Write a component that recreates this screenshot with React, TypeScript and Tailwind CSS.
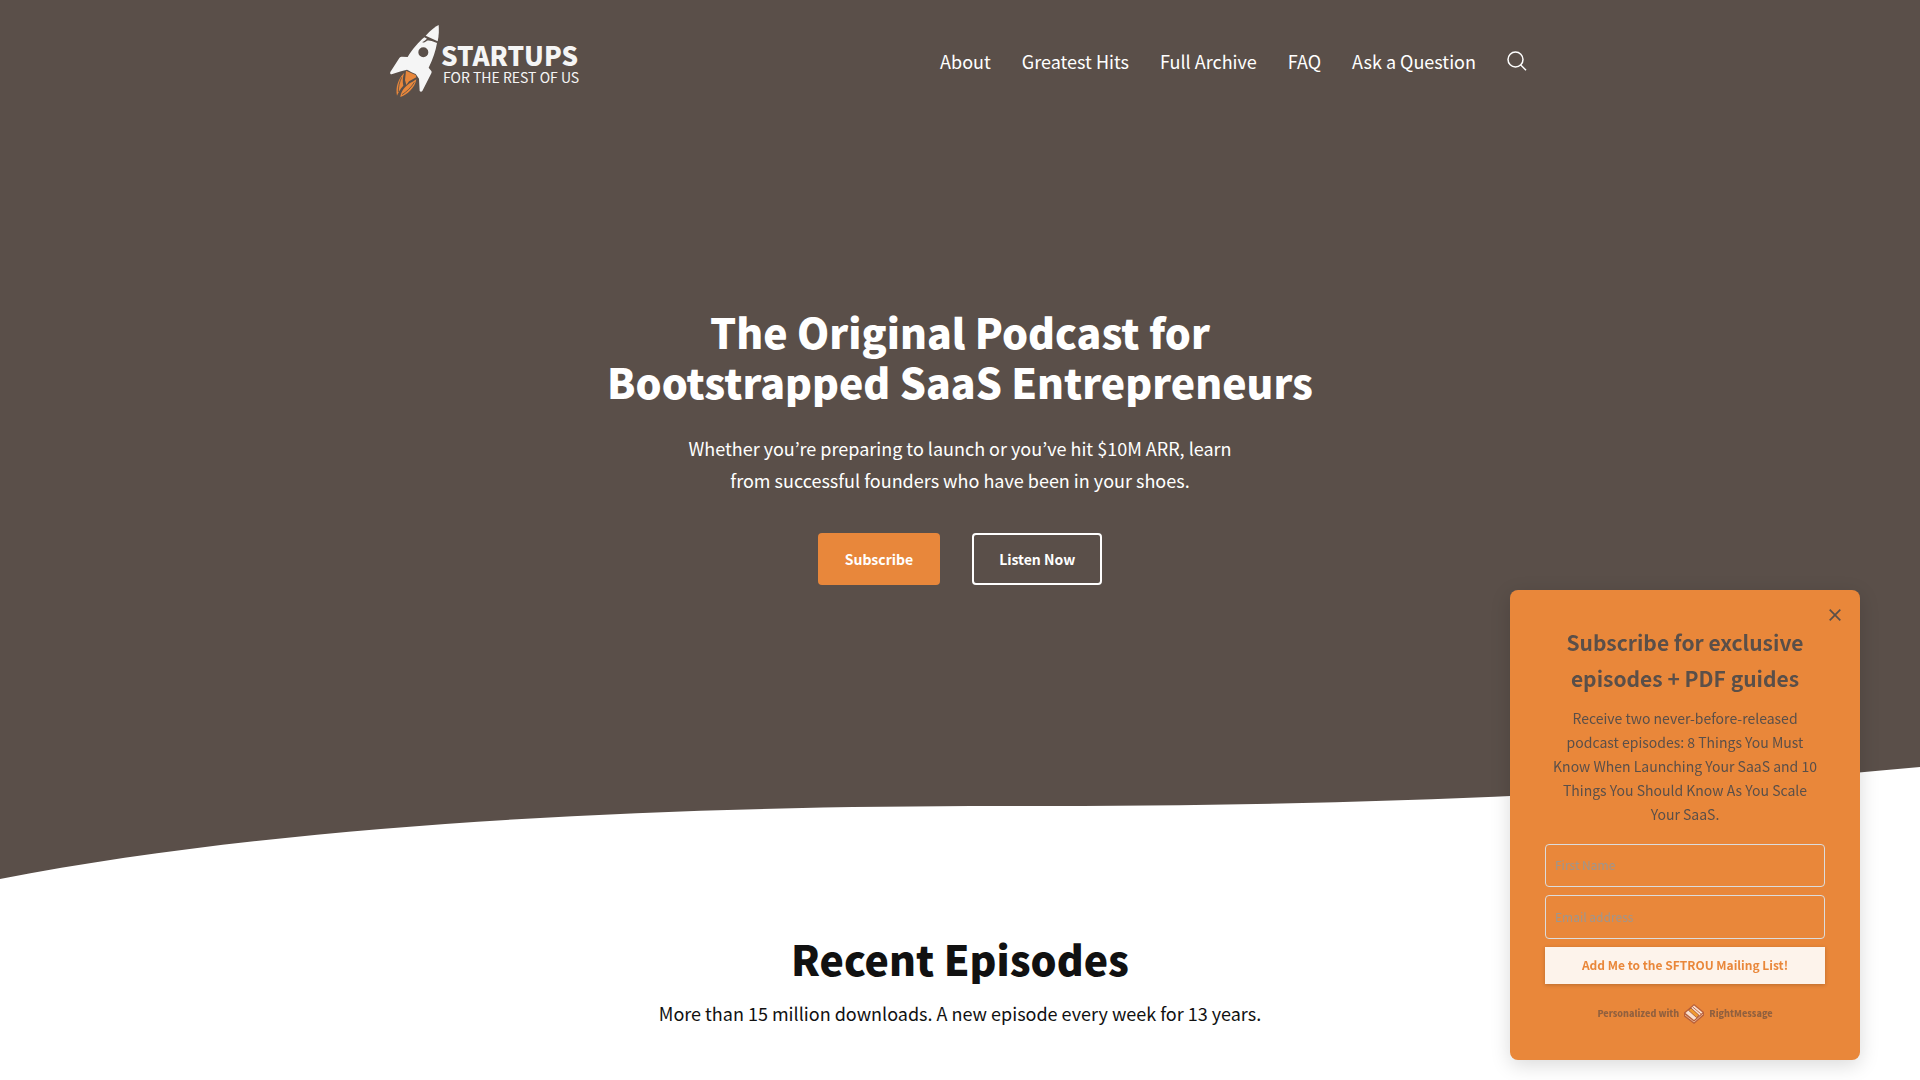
import React from "react";

const navLinks = ["About", "Greatest Hits", "Full Archive", "FAQ", "Ask a Question"];

function Rocket() {
  return (
    <svg viewBox="0 0 180 240" className="h-20 w-15 shrink-0" aria-hidden="true">
      <path
        fill="#f5f5f5"
        d="M161 15 C151 20 136 31 122 47 L158 64 C162 46 162 29 161 15 Z"
      />
      <path
        fill="#f5f5f5"
        fillRule="evenodd"
        d="M118 52 L126 56 C121 60 117 65 112 66 C115 70 120 66 126 62 C131 60 135 62 140 63 L156 69 C152 92 144 118 131 143 L139 153 Q141 156 139 160 L112 213 Q108 218 104 213 L102 176 L92 162 C82 158 74 153 66 149 L48 154 L20 163 Q14 163 16 156 L43 114 Q46 110 50 110 L68 111 C82 88 101 66 118 52 Z M115 82 A15 15 0 1 0 115 112 A15 15 0 1 0 115 82 Z"
      />
      <path
        fill="#e8873b"
        d="M63 152 L92 165 L94 172 L72 184 L64 195 L60 180 Z M58 158 C40 176 31 200 36 227 C40 218 44 209 55 197 C52 184 53 170 58 158 Z M94 178 C86 184 79 188 74 190 C58 202 49 213 46 231 C66 225 90 204 94 178 Z"
      />
      <path
        fill="none"
        stroke="#5a4f49"
        strokeWidth="2.5"
        d="M50 172 C43 186 40 200 40 216 M88 187 C78 203 66 214 51 224"
      />
    </svg>
  );
}

function Logo() {
  return (
    <a href="#" className="flex items-start text-[#f5f5f5]">
      <Rocket />
      <span className="-ml-1 flex flex-col pt-[19px]">
        <span className="text-[26px] leading-8 font-black">STARTUPS</span>
        <span className="pl-0.5 text-[14px] leading-3">FOR THE REST OF US</span>
      </span>
    </a>
  );
}

function SearchIcon() {
  return (
    <svg viewBox="0 0 20 20" className="size-5" fill="none" stroke="currentColor" strokeWidth="1.5" aria-hidden="true">
      <circle cx="8.5" cy="8.5" r="7.5" />
      <path d="M13.5 13.8 L19 19.2" />
    </svg>
  );
}

function StackIcon() {
  return (
    <svg viewBox="0 0 20 20" className="size-5" fill="none" aria-hidden="true">
      <path fill="#b9603a" d="M0 8.500 L10 0 L20 8 V11.500 L10 20 L0 12.500 Z" />
      <path stroke="#efc3a4" strokeWidth="0.800" d="M1 11 L10 18 L19 10" />
      <path fill="#fae0cf" d="M1.500 9 L10 1.500 L18.500 8.500 L10 16 Z" />
      <path fill="#f09a30" stroke="#a3512f" strokeWidth="0.800" d="M4.500 6.300 L7 4 L15 11.300 L12.500 13.500 Z" />
      <path stroke="#b4532f" strokeWidth="0.800" d="M8.500 2.800 L16.800 9.800" />
    </svg>
  );
}

function SubscribePopup() {
  return (
    <aside className="fixed right-15 bottom-5 w-[350px] rounded-lg bg-[#e9873a] px-[35px] pt-[34px] pb-9 text-center text-[#5a4f49] shadow-[0_5px_20px_rgba(0,0,0,0.15)]">
      <button type="button" aria-label="Close" className="absolute top-[18px] right-[18px] p-px">
        <svg viewBox="0 0 12 12" className="size-3" fill="none" stroke="currentColor" strokeWidth="1.700">
          <path d="M0.700 0.700 L11.300 11.300 M11.300 0.700 L0.700 11.300" />
        </svg>
      </button>
      <h2 className="text-[21px] leading-9 font-bold">
        Subscribe for exclusive
        <br />
        episodes + PDF guides
      </h2>
      <p className="mt-2.5 px-[5px] text-[14px] leading-6">
        Receive two never-before-released podcast episodes: 8 Things You Must Know When Launching Your SaaS and 10
        Things You Should Know As You Scale Your SaaS.
      </p>
      <form className="mt-[18px] flex flex-col gap-2" onSubmit={(e) => e.preventDefault()}>
        <input
          type="text"
          aria-label="First Name"
          placeholder="First Name"
          className="h-[43px] rounded border border-[#dcdcdc] px-[9px] pb-0.5 text-[12px] placeholder:text-[#9c9690]"
        />
        <input
          type="email"
          aria-label="Email address"
          placeholder="Email address"
          className="h-11 rounded border border-[#dcdcdc] px-[9px] pb-0.5 text-[12px] placeholder:text-[#9c9690]"
        />
        <button
          type="submit"
          className="h-[37px] bg-[#fdf3eb] pb-0.5 text-[12px] font-bold text-[#e9873a] shadow-[0_1px_4px_rgba(0,0,0,0.2)]"
        >
          Add Me to the SFTROU Mailing List!
        </button>
      </form>
      <a href="#" className="mt-5 flex items-center justify-center gap-[5px] text-[9px] leading-5 font-black text-[#91603e]">
        Personalized with <StackIcon /> RightMessage
      </a>
    </aside>
  );
}

export default function App() {
  return (
    <div className="min-h-screen overflow-x-hidden bg-white font-['Noto_Sans_CJK_KR',sans-serif] text-[#111111]">
      <section className="bg-[#5a4f49] text-white">
        <header className="mx-auto flex w-full max-w-[1150px] items-start justify-between pt-5">
          <Logo />
          <nav className="flex items-center gap-[31px] pt-[25px] pr-2 text-[18px] leading-8">
            {navLinks.map((label) => (
              <a key={label} href="#">
                {label}
              </a>
            ))}
            <button type="button" aria-label="Search">
              <SearchIcon />
            </button>
          </nav>
        </header>
        <div className="flex flex-col items-center pt-[206px] text-center">
          <h1 className="text-[41px] leading-[50px] font-black">
            The Original Podcast for
            <br />
            Bootstrapped SaaS Entrepreneurs
          </h1>
          <p className="mt-[26px] max-w-[580px] text-[18px] leading-8">
            Whether you’re preparing to launch or you’ve hit $10M ARR, learn from successful founders who have been in
            your shoes.
          </p>
          <div className="mt-[37px] flex gap-8">
            <a href="#" className="rounded bg-[#e8873b] px-[27px] py-3.5 text-[14px] leading-6 font-bold">
              Subscribe
            </a>
            <a href="#" className="rounded border-2 border-white px-[25px] py-3 text-[14px] leading-6 font-bold">
              Listen Now
            </a>
          </div>
        </div>
        <svg viewBox="0 0 1920 112" preserveAspectRatio="none" className="mt-[182px] block h-28 w-full" aria-hidden="true">
          <path fill="#ffffff" d="M0 112 C300 54 680 39 1000 39 C1350 39 1600 30 1920 0 V112 Z" />
        </svg>
      </section>
      <section className="flex flex-col items-center px-6 pt-[54px] text-center">
        <h2 className="text-[41px] leading-[50px] font-black">Recent Episodes</h2>
        <p className="mt-3.5 text-[18px] leading-8">More than 15 million downloads. A new episode every week for 13 years.</p>
      </section>
      <SubscribePopup />
    </div>
  );
}
